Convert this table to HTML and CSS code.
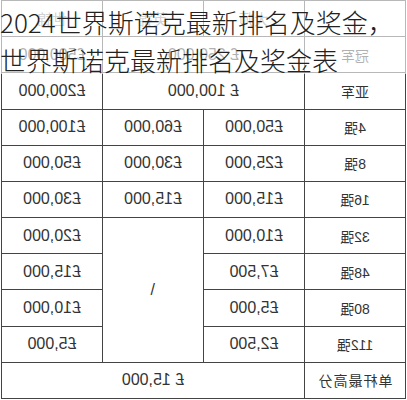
FILE: index.html
```html
<!DOCTYPE html>
<html lang="zh-CN">
<head>
<meta charset="utf-8">
<title>2024世界斯诺克最新排名及奖金</title>
<link rel="stylesheet" href="styles.css">
</head>
<body>
<div class="page">
  <table class="prize">
    <colgroup><col><col><col><col></colgroup>
    <tr class="head"><td></td><td>大师</td><td>英锦</td><td>世锦</td></tr>
    <tr><td class="rank">冠军</td><td colspan="2">£ 250,000</td><td>£500,000</td></tr>
    <tr><td class="rank">亚军</td><td colspan="2">£ 100,000</td><td>£200,000</td></tr>
    <tr><td class="rank">4强</td><td>£50,000</td><td>£60,000</td><td>£100,000</td></tr>
    <tr><td class="rank">8强</td><td>£25,000</td><td>£30,000</td><td>£50,000</td></tr>
    <tr><td class="rank">16强</td><td>£15,000</td><td>£15,000</td><td>£30,000</td></tr>
    <tr><td class="rank">32强</td><td>£10,000</td><td class="slash" rowspan="4"><span>/</span></td><td>£20,000</td></tr>
    <tr><td class="rank">48强</td><td>£7,500</td><td>£15,000</td></tr>
    <tr><td class="rank">80强</td><td>£5,000</td><td>£10,000</td></tr>
    <tr><td class="rank">112强</td><td>£2,500</td><td>£5,000</td></tr>
    <tr><td class="rank wide">单杆最高分</td><td colspan="3">£ 15,000</td></tr>
  </table>
  <h1 class="title">2024世界斯诺克最新排名及奖金，世界斯诺克最新排名及奖金表</h1>
</div>
</body>
</html>
```

FILE: styles.css
```css
body {
  margin: 0;
  background: #fff;
}

.page {
  position: relative;
  width: 407px;
  height: 400px;
  overflow: hidden;
}

.prize {
  border-collapse: collapse;
  table-layout: fixed;
  width: 405px;
  height: 398px;
  margin-left: 1px;
  transform: scaleX(-1);
  font-family: "Liberation Sans", "Noto Sans CJK SC", sans-serif;
  font-size: 16px;
  color: #333;
}

.prize tr {
  height: 36.18px;
}

.prize td {
  border: 1px solid #444;
  text-align: center;
  vertical-align: middle;
  padding: 0;
}

.prize .head td {
  color: #8a8a8a;
  font-size: 15px;
}

.rank {
  font-size: 14px;
}

.rank.wide {
  letter-spacing: 1px;
}

.slash span {
  display: inline-block;
  transform: scaleX(-1);
}

.title {
  position: absolute;
  top: 0;
  left: 0;
  width: 407px;
  height: 74px;
  margin: 0;
  padding-top: 3px;
  box-sizing: border-box;
  font: 300 26px/38px "Noto Sans CJK SC", sans-serif;
  color: #222;
  background: rgba(255, 255, 255, 0.62);
}
```
